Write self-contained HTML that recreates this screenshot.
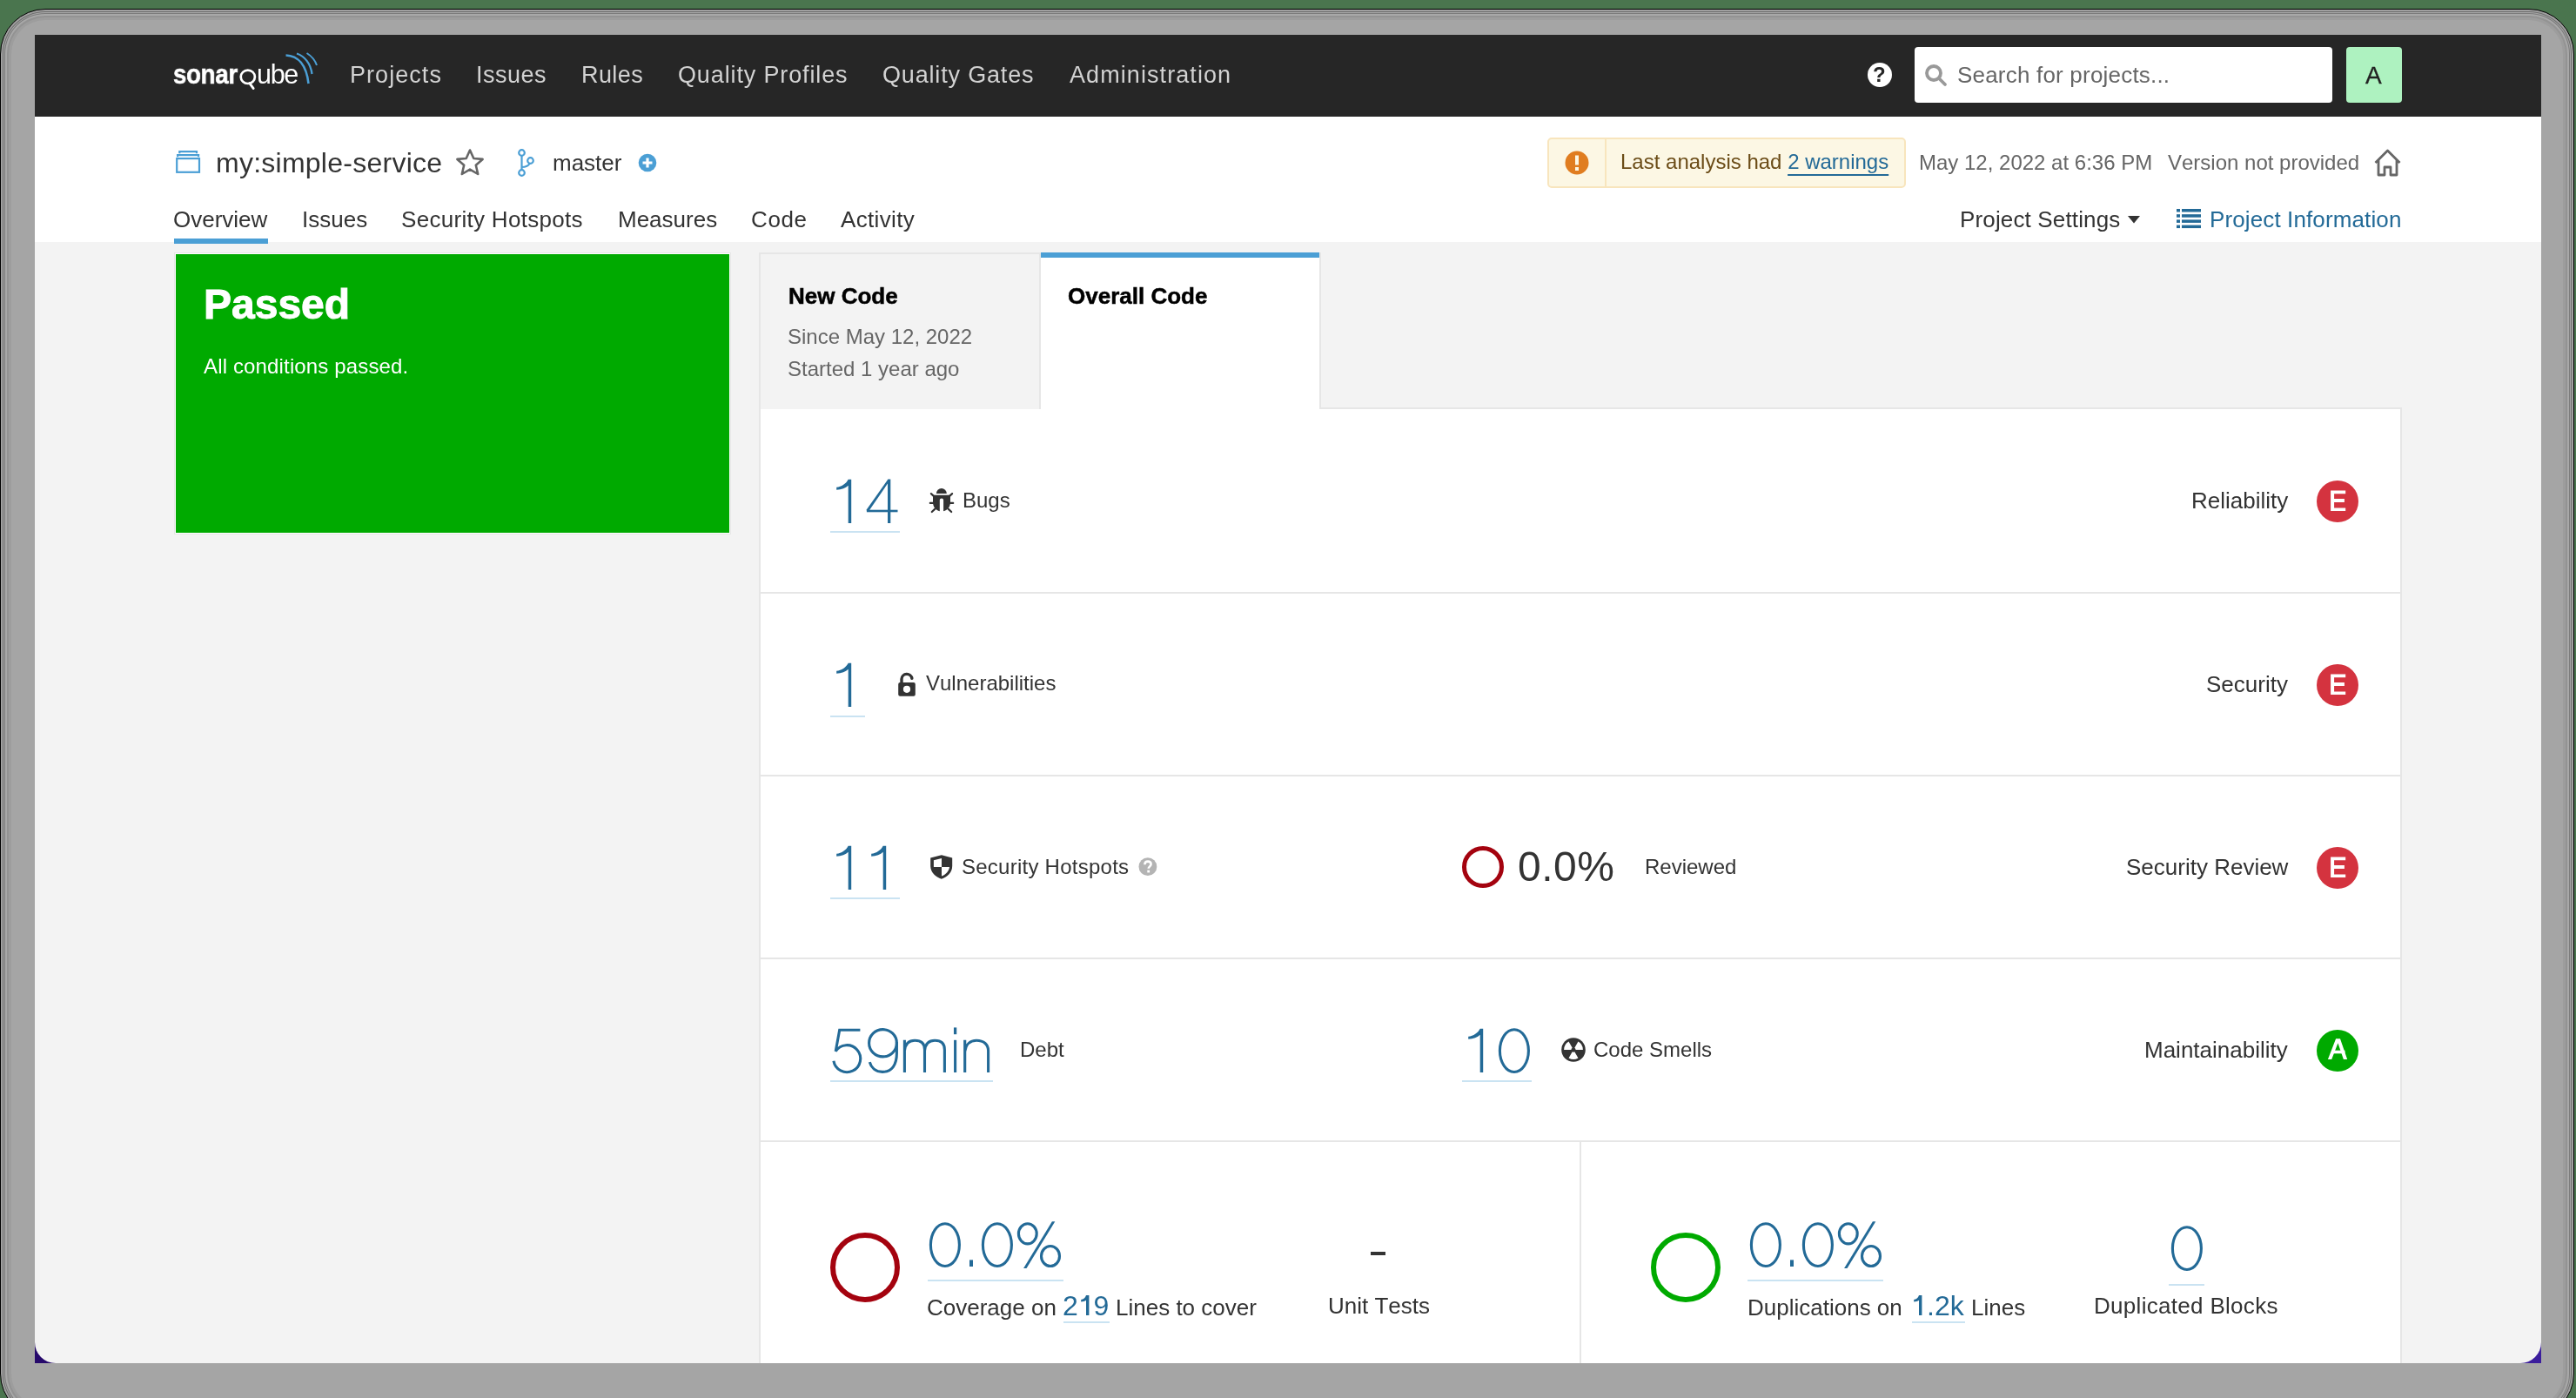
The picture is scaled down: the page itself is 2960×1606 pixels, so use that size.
<!DOCTYPE html>
<html><head><meta charset="utf-8">
<style>
html,body{margin:0;padding:0;}
body{width:2960px;height:1606px;overflow:hidden;position:relative;background:#4a754e;font-family:"Liberation Sans",sans-serif;font-kerning:none;}
.frame{position:absolute;left:0;top:10px;width:2958px;height:1620px;border:1.5px solid #000;border-radius:52px;background:#a5a5a5;box-sizing:border-box;
 box-shadow:inset 0 0 0 2px #a0a0a0,inset 0 0 0 3px #6f6f6f,inset 0 0 0 4px #a5a5a5,inset 0 0 0 5px #7c7c7c,inset 0 0 0 7px #a8a8a8,inset 0 0 0 9px #939393,inset 0 0 0 12px #9d9d9d;}
.corner{position:absolute;width:30px;height:30px;}
.win{position:absolute;left:40px;top:40px;width:2880px;height:1526px;background:#f3f3f3;overflow:hidden;border-radius:0 0 24px 24px;}
.t{position:absolute;white-space:nowrap;line-height:1;will-change:transform;}
.abs{position:absolute;}
.navi{top:72.9px;font-size:27px;color:#d2d2d2;}
.tab{top:239px;font-size:26px;color:#333;}
.rl{font-size:26px;color:#333;}
.big{font-size:72px;color:#236a97;-webkit-text-stroke:3px #fff;}
.ul{position:absolute;height:2px;background:#cae3f2;}
.badge{position:absolute;width:48px;height:48px;border-radius:50%;color:#fff;font-size:27px;line-height:48px;text-align:center;}
.sup{font-size:32px;color:#236a97;}
</style></head>
<body>
<div class="frame"></div>
<div class="corner" style="left:40px;top:1536px;background:#26096b;"></div>
<div class="corner" style="left:2890px;top:1536px;background:#3b1d9c;"></div>
<div class="win" id="win"></div>
<!-- NAV -->
<div class="abs" style="left:40px;top:40px;width:2880px;height:94px;background:#262626;"></div>
<!-- logo -->
<div class="t" style="left:199px;top:70.4px;font-size:31px;font-weight:700;color:#fff;transform:scaleX(0.89);transform-origin:0 0;letter-spacing:-0.3px;-webkit-text-stroke:0.6px #fff;">sonar</div>
<svg class="abs" style="left:270px;top:74px" width="30" height="32" viewBox="270 74 30 32"><ellipse cx="284.8" cy="88.3" rx="8.1" ry="7.7" fill="none" stroke="#fff" stroke-width="2.7"/><path d="M286.8 95.6 L291.2 101.6" stroke="#fff" stroke-width="2.8" stroke-linecap="round"/></svg>
<div class="t" style="left:294.5px;top:70.4px;font-size:30.5px;color:#fff;letter-spacing:-1.3px;">ube</div>
<svg class="abs" style="left:320px;top:58px" width="50" height="44" viewBox="0 0 50 44">
<path d="M8.5 5.5 C22 6 32 16 34.5 38" fill="none" stroke="#4b9fd5" stroke-width="2.6"/>
<path d="M21 3.5 C30 6.5 37 15 38.5 27" fill="none" stroke="#4b9fd5" stroke-width="2.3"/>
<path d="M32.5 3 C38 6.5 42 11 44 17" fill="none" stroke="#4b9fd5" stroke-width="2"/>
</svg>
<div class="t navi" style="left:402px;letter-spacing:1.05px;">Projects</div>
<div class="t navi" style="left:547px;letter-spacing:0.5px;">Issues</div>
<div class="t navi" style="left:668px;letter-spacing:0.4px;">Rules</div>
<div class="t navi" style="left:779px;letter-spacing:0.87px;">Quality Profiles</div>
<div class="t navi" style="left:1014px;letter-spacing:0.83px;">Quality Gates</div>
<div class="t navi" style="left:1229px;letter-spacing:1.08px;">Administration</div>
<!-- help -->
<div class="abs" style="left:2146px;top:72px;width:28px;height:28px;border-radius:50%;background:#fff;"></div>
<div class="t" style="left:2152px;top:74px;font-size:24px;font-weight:700;color:#262626;">?</div>
<!-- search -->
<div class="abs" style="left:2200px;top:54px;width:480px;height:64px;border-radius:4px;background:#fff;"></div>
<svg class="abs" style="left:2210px;top:72px" width="30" height="30" viewBox="0 0 30 30">
<circle cx="12" cy="12" r="8" fill="none" stroke="#999" stroke-width="3.8"/>
<line x1="18" y1="18" x2="25" y2="25" stroke="#999" stroke-width="3.8" stroke-linecap="round"/>
</svg>
<div class="t" style="left:2249px;top:73px;font-size:26px;color:#666;letter-spacing:0.2px;">Search for projects...</div>
<!-- avatar -->
<div class="abs" style="left:2696px;top:54px;width:64px;height:64px;border-radius:4px;background:#aef2c0;"></div>
<div class="t" style="left:2718px;top:73px;font-size:28px;color:#222;-webkit-text-stroke:0.3px #222;">A</div>

<!-- HEADER (white) -->
<div class="abs" style="left:40px;top:134px;width:2880px;height:144px;background:#fff;"></div>
<svg class="abs" style="left:200px;top:170px" width="32" height="32" viewBox="0 0 32 32"><rect x="3.2" y="12.1" width="25.8" height="15.7" fill="none" stroke="#4b9fd5" stroke-width="2.2"/><path d="M4.1 10.2 V8.2 H28.1 V10.2" fill="none" stroke="#4b9fd5" stroke-width="2.2"/><path d="M6.3 6.2 V4.2 H26 V6.2" fill="none" stroke="#4b9fd5" stroke-width="2.2"/></svg>
<div class="t" style="left:248px;top:171px;font-size:32px;color:#333;letter-spacing:0.25px;">my:simple-service</div>
<svg class="abs" style="left:522px;top:170px" width="36" height="34" viewBox="0 0 36 34">
<path d="M18 2.5 L22.3 12 L32.6 12.9 L24.8 19.7 L27.2 30 L18 24.6 L8.8 30 L11.2 19.7 L3.4 12.9 L13.7 12 Z" fill="none" stroke="#666" stroke-width="2.6" stroke-linejoin="round"/>
</svg>
<svg class="abs" style="left:592px;top:168px" width="24" height="38" viewBox="0 0 24 38">
<circle cx="7.5" cy="7.5" r="3.3" fill="none" stroke="#4b9fd5" stroke-width="2.2"/>
<circle cx="7.5" cy="30.5" r="3.3" fill="none" stroke="#4b9fd5" stroke-width="2.2"/>
<circle cx="17.5" cy="16.5" r="3.3" fill="none" stroke="#4b9fd5" stroke-width="2.2"/>
<path d="M7.5 10.8 V27.2 M7.5 24 C12 24 16 22 16.5 19.6" fill="none" stroke="#4b9fd5" stroke-width="2.2"/>
</svg>
<div class="t" style="left:635px;top:174px;font-size:26px;color:#333;">master</div>
<svg class="abs" style="left:733px;top:176px" width="22" height="22" viewBox="0 0 22 22">
<circle cx="11" cy="11" r="10.3" fill="#4b9fd5"/>
<path d="M11 5.5 V16.5 M5.5 11 H16.5" stroke="#fff" stroke-width="3.2"/>
</svg>
<!-- warning -->
<div class="abs" style="left:1778px;top:158px;width:412px;height:58px;box-sizing:border-box;border:2px solid #f8e5bd;border-radius:5px;background:#fcf7e4;"></div>
<div class="abs" style="left:1844px;top:160px;width:2px;height:54px;background:#f8e5bd;"></div>
<svg class="abs" style="left:1797px;top:172px" width="30" height="30" viewBox="0 0 30 30">
<circle cx="15" cy="15" r="13.5" fill="#e07d20"/>
<rect x="13" y="6.5" width="4" height="11" fill="#fcf7e4"/>
<rect x="13" y="20" width="4" height="4" fill="#fcf7e4"/>
</svg>
<div class="t" style="left:1862px;top:174px;font-size:24px;color:#6b4c17;">Last analysis had <span style="color:#236a97;text-decoration:underline;text-decoration-thickness:2px;text-underline-offset:5.5px;text-decoration-skip-ink:none;">2 warnings</span></div>
<div class="t" style="left:2205px;top:175px;font-size:24px;color:#666;">May 12, 2022 at 6:36 PM</div>
<div class="t" style="left:2491px;top:175px;font-size:24px;color:#666;">Version not provided</div>
<svg class="abs" style="left:2726px;top:169px" width="36" height="36" viewBox="0 0 36 36">
<path d="M3.5 18 L17.5 4 L31.5 18 M7 15 V32 H14 V23 H21 V32 H28 V15" fill="none" stroke="#666" stroke-width="2.8" stroke-linejoin="round"/>
</svg>
<!-- tabs -->
<div class="t tab" style="left:199px;">Overview</div>
<div class="abs" style="left:200px;top:274px;width:108px;height:6px;background:#4b9fd5;"></div>
<div class="t tab" style="left:347px;">Issues</div>
<div class="t tab" style="left:461px;letter-spacing:0.3px;">Security Hotspots</div>
<div class="t tab" style="left:710px;">Measures</div>
<div class="t tab" style="left:863px;letter-spacing:0.6px;">Code</div>
<div class="t tab" style="left:966px;letter-spacing:0.35px;">Activity</div>
<div class="t tab" style="left:2252px;letter-spacing:0.15px;">Project Settings</div>
<svg class="abs" style="left:2444px;top:247px" width="16" height="11" viewBox="0 0 16 11"><path d="M1 1 H15 L8 9.5 Z" fill="#333"/></svg>
<svg class="abs" style="left:2500px;top:239px" width="30" height="24" viewBox="0 0 30 24">
<rect x="1" y="1" width="4" height="3.5" fill="#236a97"/><rect x="7" y="1" width="22" height="3.5" fill="#236a97"/>
<rect x="1" y="7.2" width="4" height="3.5" fill="#236a97"/><rect x="7" y="7.2" width="22" height="3.5" fill="#236a97"/>
<rect x="1" y="13.4" width="4" height="3.5" fill="#236a97"/><rect x="7" y="13.4" width="22" height="3.5" fill="#236a97"/>
<rect x="1" y="19.6" width="4" height="3.5" fill="#236a97"/><rect x="7" y="19.6" width="22" height="3.5" fill="#236a97"/>
</svg>
<div class="t tab" style="left:2539px;color:#236a97;letter-spacing:0.12px;">Project Information</div>
<!-- GREEN BOX -->
<div class="abs" style="left:200px;top:290px;width:640px;height:324px;box-sizing:border-box;border:1px solid #e6e6e6;background:#fff;"></div>
<div class="abs" style="left:202px;top:292px;width:636px;height:320px;background:#00aa00;"></div>
<div class="t" style="left:234px;top:325.5px;font-size:48px;font-weight:700;color:#fff;-webkit-text-stroke:1px #fff;">Passed</div>
<div class="t" style="left:234px;top:408.5px;font-size:24px;color:#fff;letter-spacing:0.15px;">All conditions passed.</div>
<!-- TABS -->
<div class="abs" style="left:872px;top:290px;width:324px;height:180px;box-sizing:border-box;border:2px solid #e6e6e6;border-bottom:none;background:#f3f3f3;"></div>
<div class="t" style="left:906px;top:327px;font-size:26px;font-weight:700;color:#000;-webkit-text-stroke:0.5px #000;">New Code</div>
<div class="t" style="left:905px;top:375px;font-size:24px;color:#666;">Since May 12, 2022</div>
<div class="t" style="left:905px;top:411.7px;font-size:24px;color:#666;">Started 1 year ago</div>
<div class="abs" style="left:1196px;top:290px;width:322px;height:180px;box-sizing:border-box;border-right:2px solid #e6e6e6;background:#fff;"></div>
<div class="abs" style="left:1196px;top:290px;width:320px;height:6px;background:#4b9fd5;"></div>
<div class="t" style="left:1227px;top:327.3px;font-size:26px;font-weight:700;color:#000;-webkit-text-stroke:0.5px #000;">Overall Code</div>
<!-- CARD -->
<div class="abs" style="left:1516px;top:468px;width:1244px;height:2px;background:#e6e6e6;"></div>
<div class="abs" style="left:872px;top:470px;width:1888px;height:1096px;box-sizing:border-box;border-left:2px solid #e6e6e6;border-right:2px solid #e6e6e6;background:#fff;"></div>
<div class="abs" style="left:874px;top:680px;width:1884px;height:2px;background:#e6e6e6;"></div>
<div class="abs" style="left:874px;top:890px;width:1884px;height:2px;background:#e6e6e6;"></div>
<div class="abs" style="left:874px;top:1100px;width:1884px;height:2px;background:#e6e6e6;"></div>
<div class="abs" style="left:874px;top:1310px;width:1884px;height:2px;background:#e6e6e6;"></div>
<div class="abs" style="left:1815px;top:1312px;width:2px;height:254px;background:#e6e6e6;"></div>

<!-- ROW 1 -->
<div class="ul" style="left:954px;top:610px;width:80px;"></div>
<svg class="abs" style="left:1066px;top:559px" width="32" height="32" viewBox="0 0 32 32">
<path d="M9.9 7.9 A5.95 5.95 0 0 1 21.8 7.9 Z" fill="#333"/>
<path d="M6 9.8 H26 V18 C26 23.5 22.5 27.3 18.1 28.2 V15.5 C18.1 14.2 17.2 13.5 16 13.5 C14.8 13.5 13.8 14.2 13.8 15.5 V28.2 C9.5 27.3 6 23.5 6 18 Z" fill="#333"/>
<path d="M3.9 8.1 L6.6 10.6 M2.8 18.9 H6.2 M4.8 29 L8.4 25.6 M28.1 8.1 L25.4 10.6 M29.2 18.9 H25.8 M27.2 29 L23.6 25.6" stroke="#333" stroke-width="2.2" stroke-linecap="round"/>
</svg>
<div class="t" style="left:1106px;top:562.9px;font-size:24px;color:#333;">Bugs</div>
<div class="t rl" style="right:331px;top:561.7px;">Reliability</div>
<svg class="abs" style="left:2662px;top:552px" width="48" height="48" viewBox="0 0 48 48"><circle cx="24" cy="24" r="24" fill="#d4333f"/><path d="M16.1 11.5 H33.2 V15.2 H20.1 V21.1 H31.9 V24.9 H20.1 V31.4 H33.2 V35.1 H16.1 Z" fill="#fff"/></svg>

<!-- ROW 2 -->
<div class="ul" style="left:954px;top:822px;width:40px;"></div>
<svg class="abs" style="left:1030px;top:770px" width="24" height="32" viewBox="0 0 24 32">
<path d="M6 15 V10 A6 6 0 0 1 17.9 9.4" fill="none" stroke="#333" stroke-width="3.4" stroke-linecap="round"/>
<rect x="2.2" y="14" width="19.6" height="15.7" rx="2" fill="#333"/>
<circle cx="12" cy="21.8" r="4.1" fill="#fff"/>
</svg>
<div class="t" style="left:1064px;top:773.2px;font-size:24px;color:#333;">Vulnerabilities</div>
<div class="t rl" style="right:331px;top:772.9px;">Security</div>
<svg class="abs" style="left:2662px;top:763px" width="48" height="48" viewBox="0 0 48 48"><circle cx="24" cy="24" r="24" fill="#d4333f"/><path d="M16.1 11.5 H33.2 V15.2 H20.1 V21.1 H31.9 V24.9 H20.1 V31.4 H33.2 V35.1 H16.1 Z" fill="#fff"/></svg>

<!-- ROW 3 -->
<div class="ul" style="left:954px;top:1031px;width:80px;"></div>
<svg class="abs" style="left:1066px;top:979px" width="32" height="34" viewBox="0 0 32 34">
<path d="M15.9 3.2 L28.2 6.4 V16 C28.2 23 22.5 28.5 15.8 30.8 C9.2 28.5 3.2 23 3.2 16 V6.4 Z" fill="#333"/>
<path d="M6.9 9.3 L16 6.9 V16.9 H6.9 Z" fill="#fff"/>
<path d="M16 17 H25 C24.5 21.5 21 25.5 16 27.5 Z" fill="#fff"/>
</svg>
<div class="t" style="left:1105px;top:984.1px;font-size:24px;color:#333;letter-spacing:0.25px;">Security Hotspots</div>
<svg class="abs" style="left:1308px;top:985px" width="22" height="22" viewBox="0 0 22 22">
<circle cx="10.9" cy="10.7" r="10.4" fill="#b4b4b4"/>
<path d="M7.4 8.2 C7.4 5.9 9 4.6 11 4.6 C13.1 4.6 14.6 5.9 14.6 7.8 C14.6 10.2 11.7 10.5 11.7 12.8" fill="none" stroke="#fff" stroke-width="2.6"/>
<rect x="10.3" y="14.6" width="2.8" height="2.8" fill="#fff"/>
</svg>
<svg class="abs" style="left:1680px;top:972px" width="48" height="48" viewBox="0 0 48 48">
<circle cx="24" cy="24" r="21.5" fill="none" stroke="#a4030f" stroke-width="5"/>
</svg>
<div class="t" style="left:1744px;top:972.4px;font-size:48px;color:#333;letter-spacing:0.5px;">0.0%</div>
<div class="t" style="left:1890px;top:984.1px;font-size:24px;color:#333;">Reviewed</div>
<div class="t rl" style="right:331px;top:983.3px;">Security Review</div>
<svg class="abs" style="left:2662px;top:973px" width="48" height="48" viewBox="0 0 48 48"><circle cx="24" cy="24" r="24" fill="#d4333f"/><path d="M16.1 11.5 H33.2 V15.2 H20.1 V21.1 H31.9 V24.9 H20.1 V31.4 H33.2 V35.1 H16.1 Z" fill="#fff"/></svg>

<!-- ROW 4 -->
<div class="ul" style="left:954px;top:1241px;width:187px;"></div>
<div class="t" style="left:1172px;top:1194.4px;font-size:24px;color:#333;">Debt</div>
<div class="ul" style="left:1680px;top:1241px;width:80px;"></div>
<svg class="abs" style="left:1792px;top:1190px" width="32" height="32" viewBox="0 0 32 32"><circle cx="16" cy="16" r="13.8" fill="#333"/><path d="M17.30 13.75 L21.45 6.56 A10.9 10.9 0 0 1 26.90 16.00 L18.60 16.00 A2.6 2.6 0 0 0 17.30 13.75 Z M13.40 16.00 L5.10 16.00 A10.9 10.9 0 0 1 10.55 6.56 L14.70 13.75 A2.6 2.6 0 0 0 13.40 16.00 Z M17.30 18.25 L21.45 25.44 A10.9 10.9 0 0 1 10.55 25.44 L14.70 18.25 A2.6 2.6 0 0 0 17.30 18.25 Z" fill="#fff"/></svg>
<div class="t" style="left:1831px;top:1194.4px;font-size:24px;color:#333;">Code Smells</div>
<div class="t rl" style="right:331px;top:1192.7px;">Maintainability</div>
<svg class="abs" style="left:2662px;top:1183px" width="48" height="48" viewBox="0 0 48 48"><circle cx="24" cy="24" r="24" fill="#00aa00"/><path d="M22.1 10.2 L26.4 10.2 L17.2 34 L12.9 34 Z M22.7 10.2 L27 10.2 L35.2 34 L30.9 34 Z" fill="#fff"/><rect x="17" y="23.7" width="15.5" height="3.6" fill="#fff"/></svg>

<!-- ROW 5 -->
<svg class="abs" style="left:954px;top:1416px" width="80" height="80" viewBox="0 0 80 80">
<circle cx="40" cy="40" r="37" fill="none" stroke="#a4030f" stroke-width="6"/>
</svg>
<div class="ul" style="left:1066px;top:1470px;width:156px;"></div>
<div class="t" style="left:1065px;top:1488.7px;font-size:26px;color:#333;">Coverage on</div>
<div class="t sup" style="left:1221px;top:1483.9px;">2<span style="display:inline-block;width:17.8px"></span>9</div>
<svg class="abs" style="left:1240px;top:1480.9px" width="16" height="32" viewBox="-8 -30 16 32"><path d="M0 -23 H3.4 V0 H0 V-17.2 C-1.5 -16.2 -3.5 -15.6 -5.8 -15.5 V-18.1 C-3 -18.3 -0.9 -20 0 -23 Z" fill="#236a97"/></svg>
<div class="t" style="left:1282px;top:1488.7px;font-size:26px;color:#333;">Lines to cover</div>
<div class="ul" style="left:1222px;top:1518px;width:53px;"></div>
<div class="abs" style="left:1575px;top:1438px;width:17px;height:4px;background:#333;"></div>
<div class="t" style="left:1526px;top:1487.2px;font-size:26px;color:#333;">Unit Tests</div>

<svg class="abs" style="left:1897px;top:1416px" width="80" height="80" viewBox="0 0 80 80">
<circle cx="40" cy="40" r="37" fill="none" stroke="#00aa00" stroke-width="6"/>
</svg>
<div class="ul" style="left:2008px;top:1470px;width:156px;"></div>
<div class="t" style="left:2008px;top:1488.7px;font-size:26px;color:#333;">Duplications on</div>
<div class="t sup" style="left:2214px;top:1483.9px;">.2k</div>
<svg class="abs" style="left:2197px;top:1480.9px" width="16" height="32" viewBox="-8 -30 16 32"><path d="M0 -23 H3.4 V0 H0 V-17.2 C-1.5 -16.2 -3.5 -15.6 -5.8 -15.5 V-18.1 C-3 -18.3 -0.9 -20 0 -23 Z" fill="#236a97"/></svg>
<div class="t" style="left:2265px;top:1488.7px;font-size:26px;color:#333;">Lines</div>
<div class="ul" style="left:2197px;top:1518px;width:61px;"></div>
<div class="ul" style="left:2492px;top:1475px;width:41px;"></div>
<div class="t" style="left:2406px;top:1487.2px;font-size:26px;color:#333;letter-spacing:0.3px;">Duplicated Blocks</div>
<svg class="abs" style="left:954px;top:540.9px" width="80" height="70" viewBox="0 -60 80 70"><path transform="translate(0,0)" d="M20.7 -50.3 H24.2 V0 H20.7 V-43.3 C17.8 -40.6 13 -38.6 7.2 -38.2 V-41.2 C13.2 -41.9 18.2 -45.4 20.7 -50.3 Z" fill="#236a97"/><g transform="translate(40,0)"><rect x="26" y="-50.3" width="3.3" height="50.3" fill="#236a97"/><rect x="1.9" y="-15.3" width="35.6" height="2.6" fill="#236a97"/><path d="M26.3 -50.3 H29.3 L4.4 -14 H1.9 V-15.8 Z" fill="#236a97"/></g></svg>
<svg class="abs" style="left:954px;top:752.4px" width="40" height="70" viewBox="0 -60 40 70"><path transform="translate(0,0)" d="M20.7 -50.3 H24.2 V0 H20.7 V-43.3 C17.8 -40.6 13 -38.6 7.2 -38.2 V-41.2 C13.2 -41.9 18.2 -45.4 20.7 -50.3 Z" fill="#236a97"/></svg>
<svg class="abs" style="left:954px;top:961.6px" width="80" height="70" viewBox="0 -60 80 70"><path transform="translate(0,0)" d="M20.7 -50.3 H24.2 V0 H20.7 V-43.3 C17.8 -40.6 13 -38.6 7.2 -38.2 V-41.2 C13.2 -41.9 18.2 -45.4 20.7 -50.3 Z" fill="#236a97"/><path transform="translate(40,0)" d="M20.7 -50.3 H24.2 V0 H20.7 V-43.3 C17.8 -40.6 13 -38.6 7.2 -38.2 V-41.2 C13.2 -41.9 18.2 -45.4 20.7 -50.3 Z" fill="#236a97"/></svg>
<svg class="abs" style="left:954px;top:1171.7px" width="190" height="70" viewBox="0 -60 190 70"><g fill="none" stroke="#236a97" stroke-width="3.1"><path d="M34.4 -48.7 H10.7 L6.2 -24.3 A15.5 15.5 0 1 1 3.9 -13.3"/><ellipse cx="60.5" cy="-33.75" rx="15.9" ry="15.6"/><path d="M76.4 -35 V-22 C76.4 -9 71 -0.6 60 -0.6 C52 -0.6 47 -5.5 45.3 -11.8"/><path d="M85.4 -37.2 V0 M85.4 -25 C86.3 -32.5 90.5 -36.7 97.2 -36.7 C104.5 -36.7 108.5 -33 108.5 -26 V0 M108.5 -25 C109.3 -32.5 113.5 -36.7 120.2 -36.7 C127.4 -36.7 131.4 -33 131.4 -26 V0"/><path d="M143.6 -37.2 V0"/><path d="M154.7 -37.2 V0 M154.7 -24 C155.8 -32 160.8 -36.7 168 -36.7 C176.5 -36.7 181.6 -32 181.6 -25 V0"/></g><rect x="141.95" y="-51.6" width="3.3" height="7.8" fill="#236a97"/></svg>
<svg class="abs" style="left:1680px;top:1172.4px" width="80" height="70" viewBox="0 -60 80 70"><path transform="translate(0,0)" d="M20.7 -50.3 H24.2 V0 H20.7 V-43.3 C17.8 -40.6 13 -38.6 7.2 -38.2 V-41.2 C13.2 -41.9 18.2 -45.4 20.7 -50.3 Z" fill="#236a97"/><ellipse cx="59.9" cy="-24.9" rx="16.5" ry="24.4" fill="none" stroke="#236a97" stroke-width="3.1"/></svg>
<svg class="abs" style="left:1066px;top:1394.7px" width="160" height="70" viewBox="0 -60 160 70"><ellipse cx="19.9" cy="-24.9" rx="16.5" ry="24.4" fill="none" stroke="#236a97" stroke-width="3.1"/><rect x="48" y="-7.6" width="4" height="7.6" fill="#236a97"/><ellipse cx="79.9" cy="-24.9" rx="16.5" ry="24.4" fill="none" stroke="#236a97" stroke-width="3.1"/><g transform="translate(100,0)"><ellipse cx="14.8" cy="-37.7" rx="10.4" ry="11.6" fill="none" stroke="#236a97" stroke-width="3.1"/><ellipse cx="41" cy="-12" rx="10.5" ry="11.5" fill="none" stroke="#236a97" stroke-width="3.1"/><path d="M42.9 -51.8 H46.3 L13.5 2 H10.1 Z" fill="#236a97"/></g></svg>
<svg class="abs" style="left:2008.5px;top:1394.9px" width="160" height="70" viewBox="0 -60 160 70"><ellipse cx="19.9" cy="-24.9" rx="16.5" ry="24.4" fill="none" stroke="#236a97" stroke-width="3.1"/><rect x="48" y="-7.6" width="4" height="7.6" fill="#236a97"/><ellipse cx="79.9" cy="-24.9" rx="16.5" ry="24.4" fill="none" stroke="#236a97" stroke-width="3.1"/><g transform="translate(100,0)"><ellipse cx="14.8" cy="-37.7" rx="10.4" ry="11.6" fill="none" stroke="#236a97" stroke-width="3.1"/><ellipse cx="41" cy="-12" rx="10.5" ry="11.5" fill="none" stroke="#236a97" stroke-width="3.1"/><path d="M42.9 -51.8 H46.3 L13.5 2 H10.1 Z" fill="#236a97"/></g></svg>
<svg class="abs" style="left:2492.5px;top:1398.8px" width="42" height="70" viewBox="0 -60 42 70"><ellipse cx="19.9" cy="-24.9" rx="16.5" ry="24.4" fill="none" stroke="#236a97" stroke-width="3.1"/></svg>
</body></html>
